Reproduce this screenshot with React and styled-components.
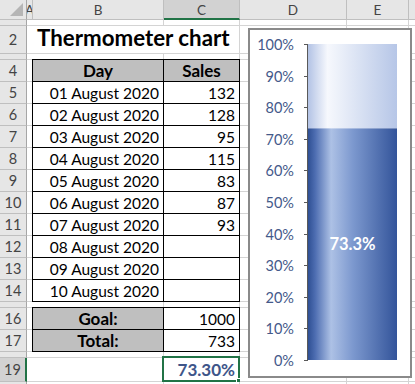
import React from 'react'
import styled, { createGlobalStyle } from 'styled-components'

const GlobalStyle = createGlobalStyle`
  html, body {
    margin: 0;
    padding: 0;
    background: #fff;
    overflow: hidden;
  }
  body {
    font-family: Lato, "Open Sans", sans-serif;
  }
`

const Sheet = styled.div`
  position: relative;
  width: 415px;
  height: 384px;
  overflow: hidden;
`

const Grid = styled.div`
  display: grid;
  grid-template-columns: 27px 6px 131px 76px 107px 62px 1fr;
  grid-template-rows: 20px 6px 28px 6px repeat(11, 22px) 6px 22px 22px 6px 24px 22px;
`

const Corner = styled.div`
  position: relative;
  background: #e6e6e6;
  border-right: 1px solid #a6a6a6;
  border-bottom: 1px solid #bfbfbf;

  &::after {
    content: '';
    position: absolute;
    right: 3px;
    bottom: 3px;
    width: 0;
    height: 0;
    border-left: 13px solid transparent;
    border-bottom: 13px solid #b5b5b5;
  }
`

const ColHead = styled.div`
  display: flex;
  align-items: center;
  justify-content: center;
  overflow: hidden;
  background: ${p => (p.$active ? '#d2d2d2' : '#e6e6e6')};
  border-right: 1px solid #bfbfbf;
  border-bottom: ${p => (p.$active ? '2px solid #217346' : '1px solid #bfbfbf')};
  color: #444;
  font-size: 13.5px;
  padding-top: ${p => (p.$active ? '1px' : '0')};
`

const RowHead = styled.div`
  display: flex;
  align-items: center;
  justify-content: center;
  overflow: hidden;
  background: ${p => (p.$active ? '#d2d2d2' : '#e6e6e6')};
  border-right: ${p => (p.$active ? '2px solid #217346' : '1px solid #a6a6a6')};
  border-bottom: 1px solid #bfbfbf;
  color: #444;
  font-size: 14.5px;
`

const Cell = styled.div`
  position: relative;
  display: flex;
  align-items: center;
  justify-content: ${p => p.$align || 'flex-start'};
  grid-column: span ${p => p.$span || 1};
  padding: 0 4px;
  white-space: nowrap;
  background: ${p => (p.$fill ? '#bfbfbf' : '#fff')};
  border-right: 1px solid ${p => (p.$boxed ? '#000' : '#d4d4d4')};
  border-bottom: 1px solid ${p => (p.$boxed ? '#000' : '#d4d4d4')};
  box-shadow: ${p =>
    p.$boxed ? '-1px 0 0 #000, 0 -1px 0 #000, -1px -1px 0 #000' : 'none'};
  color: #000;
  font-size: ${p => (p.$bold ? '17px' : '15.5px')};
  font-weight: ${p => (p.$bold ? 700 : 400)};
`

const Title = styled(Cell)`
  font-size: 22.3px;
  font-weight: 700;
  padding-bottom: 4px;
`

const Percent = styled(Cell)`
  color: #3e5589;

  &::before {
    content: '';
    position: absolute;
    top: -2px;
    left: -2px;
    right: -1px;
    bottom: -1px;
    border: 2px solid #217346;
  }

  &::after {
    content: '';
    position: absolute;
    right: -4px;
    bottom: -4px;
    width: 5px;
    height: 5px;
    background: #217346;
    border: 1px solid #fff;
  }
`

const ChartFrame = styled.div`
  position: absolute;
  left: 248px;
  top: 28px;
  width: 164px;
  height: 350px;
  box-sizing: border-box;
  border: 2px solid #8a8a8a;
  background: #fff;
`

const COLS = ['A', 'B', 'C', 'D', 'E']

const DAYS = [
  ['01 August 2020', '132'],
  ['02 August 2020', '128'],
  ['03 August 2020', '95'],
  ['04 August 2020', '115'],
  ['05 August 2020', '83'],
  ['06 August 2020', '87'],
  ['07 August 2020', '93'],
  ['08 August 2020', ''],
  ['09 August 2020', ''],
  ['10 August 2020', '']
]

const ROWS = [
  { n: 1 },
  { n: 2, kind: 'title' },
  { n: 3 },
  { n: 4, kind: 'head', b: 'Day', c: 'Sales' },
  ...DAYS.map(([b, c], i) => ({ n: 5 + i, kind: 'day', b, c })),
  { n: 15 },
  { n: 16, kind: 'label', b: 'Goal:', c: '1000' },
  { n: 17, kind: 'label', b: 'Total:', c: '733' },
  { n: 18 },
  { n: 19, kind: 'pct' },
  { n: 20 }
]

// rows too short (or too far down) to show their number
const HIDDEN_NUMBERS = [1, 3, 15, 18, 20]

const Blank = () => <Cell />

const Row = ({ row }) => {
  const head = (
    <RowHead $active={row.n === 19}>
      {HIDDEN_NUMBERS.includes(row.n) ? '' : row.n}
    </RowHead>
  )

  if (row.kind === 'title') {
    return (
      <>
        {head}
        <Blank />
        <Title $span={2}>{'Thermometer chart'}</Title>
        <Blank />
        <Blank />
        <Blank />
      </>
    )
  }

  let b = <Blank />
  let c = <Blank />
  if (row.kind === 'head') {
    b = <Cell $boxed $fill $bold $align="center">{row.b}</Cell>
    c = <Cell $boxed $fill $bold $align="center">{row.c}</Cell>
  } else if (row.kind === 'day') {
    b = <Cell $boxed $align="flex-end">{row.b}</Cell>
    c = <Cell $boxed $align="flex-end">{row.c}</Cell>
  } else if (row.kind === 'label') {
    b = <Cell $boxed $fill $bold $align="center">{row.b}</Cell>
    c = <Cell $boxed $align="flex-end">{row.c}</Cell>
  } else if (row.kind === 'pct') {
    c = <Percent $bold $align="flex-end">{'73.30%'}</Percent>
  }

  return (
    <>
      {head}
      <Blank />
      {b}
      {c}
      <Blank />
      <Blank />
      <Blank />
    </>
  )
}

// plot geometry, in px inside the frame
const TOP = 14
const BOTTOM = 330
const BAR_X = 58
const BAR_W = 89
const VALUE = 0.733

const ThermoChart = () => {
  const span = BOTTOM - TOP
  const fillTop = BOTTOM - VALUE * span
  const ticks = Array.from({ length: 11 }, (_, i) => i)

  return (
    <ChartFrame>
      <svg width="160" height="346" viewBox="0 0 160 346">
        <defs>
          <linearGradient id="empty" x1="0" x2="1" y1="0" y2="0">
            <stop offset="0" stopColor="#b3c3e5" />
            <stop offset="0.22" stopColor="#f6f8fd" />
            <stop offset="0.32" stopColor="#eef2fa" />
            <stop offset="1" stopColor="#b6c6e7" />
          </linearGradient>
          <linearGradient id="filled" x1="0" x2="1" y1="0" y2="0">
            <stop offset="0" stopColor="#2e4f93" />
            <stop offset="0.08" stopColor="#4d6db1" />
            <stop offset="0.26" stopColor="#adc1e5" />
            <stop offset="0.5" stopColor="#7d99cf" />
            <stop offset="1" stopColor="#33549a" />
          </linearGradient>
        </defs>

        <rect x={BAR_X} y={TOP} width={BAR_W} height={fillTop - TOP} fill="url(#empty)" />
        <rect x={BAR_X} y={fillTop} width={BAR_W} height={BOTTOM - fillTop} fill="url(#filled)" />

        <line x1={BAR_X - 0.5} x2={BAR_X - 0.5} y1={TOP} y2={BOTTOM + 1} stroke="#595959" />
        {ticks.map(i => {
          const y = Math.round(BOTTOM - (i / 10) * span) + 0.5
          return (
            <g key={i}>
              <line x1={BAR_X - 4} x2={BAR_X} y1={y} y2={y} stroke="#595959" />
              <text
                x="44"
                y={y + 5}
                textAnchor="end"
                fontFamily="Lato, sans-serif"
                fontSize="14.5"
                fill="#44598a"
              >
                {`${i * 10}%`}
              </text>
            </g>
          )
        })}

        <text
          x={BAR_X + BAR_W / 2}
          y={(fillTop + BOTTOM) / 2 + 6}
          textAnchor="middle"
          fontFamily="Lato, sans-serif"
          fontSize="16.5"
          fontWeight="700"
          fill="#fff"
        >
          {'73.3%'}
        </text>
      </svg>
    </ChartFrame>
  )
}

export default function App() {
  return (
    <Sheet>
      <GlobalStyle />
      <Grid>
        <Corner />
        {COLS.map(l => (
          <ColHead key={l} $active={l === 'C'}>
            {l}
          </ColHead>
        ))}
        <ColHead />
        {ROWS.map(r => (
          <Row key={r.n} row={r} />
        ))}
      </Grid>
      <ThermoChart />
    </Sheet>
  )
}
